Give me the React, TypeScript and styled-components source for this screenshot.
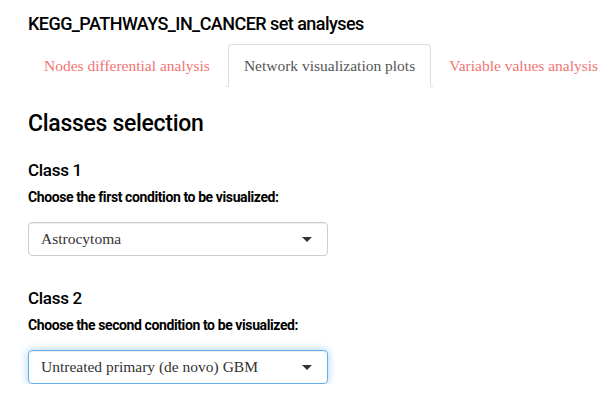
import React from "react";
import styled, { createGlobalStyle } from "styled-components";

const Global = createGlobalStyle`
  html, body { margin: 0; padding: 0; background: #ffffff; }
  body { font-family: "Liberation Serif", "Times New Roman", serif; color: #333; }
  * { box-sizing: border-box; }
`;

const heading = `Roboto, "Liberation Sans", sans-serif`;

const Page = styled.div`
  padding: 13px 0 0 28px;
  width: 614px;
`;

const Title = styled.h4`
  margin: 0;
  font-family: ${heading};
  font-size: 18px;
  line-height: 22px;
  font-weight: 500;
  letter-spacing: -0.55px;
  color: #000;
`;

const Tabs = styled.ul`
  display: flex;
  list-style: none;
  margin: 9px 0 0 0;
  padding: 0;
  border-bottom: 1px solid #dddddd;
`;

const Tab = styled.li<{ $active?: boolean }>`
  margin: 0 2px -1px 0;
  padding: 10px 15px;
  font-size: 15.5px;
  line-height: 21px;
  border: 1px solid ${(p) => (p.$active ? "#dddddd" : "transparent")};
  border-bottom-color: ${(p) => (p.$active ? "#ffffff" : "transparent")};
  border-radius: 4px 4px 0 0;
  background: #fff;
  color: ${(p) => (p.$active ? "#555555" : "#f27474")};
  white-space: nowrap;
`;

const SectionTitle = styled.h3`
  margin: 24px 0 0 0;
  font-family: ${heading};
  font-size: 23px;
  line-height: 25px;
  font-weight: 500;
  letter-spacing: -0.3px;
  color: #000;
`;

const Block = styled.div<{ $first?: boolean }>`
  display: flex;
  flex-direction: column;
  margin-top: ${(p) => (p.$first ? "25px" : "33px")};
`;

const ClassTitle = styled.h4`
  margin: 0;
  font-family: ${heading};
  font-size: 17px;
  line-height: 19px;
  font-weight: 500;
  letter-spacing: -0.3px;
  color: #000;
`;

const Label = styled.label`
  margin-top: 7px;
  font-family: ${heading};
  font-size: 14px;
  line-height: 20px;
  font-weight: 700;
  letter-spacing: -0.4px;
  color: #000;
`;

const Select = styled.div<{ $focused?: boolean }>`
  margin-top: 15px;
  width: 300px;
  height: 34px;
  display: flex;
  align-items: center;
  justify-content: space-between;
  padding: 0 15px 0 12px;
  border: 1px solid ${(p) => (p.$focused ? "#66afe9" : "#cccccc")};
  border-radius: 4px;
  background: #fff;
  box-shadow: ${(p) =>
    p.$focused
      ? "inset 0 1px 1px rgba(0,0,0,.075), 0 0 8px rgba(102,175,233,.6)"
      : "inset 0 1px 1px rgba(0,0,0,.075)"};
  font-size: 15.5px;
  color: #333;
`;

const Caret = styled.span`
  width: 0;
  height: 0;
  border-left: 5px solid transparent;
  border-right: 5px solid transparent;
  border-top: 5px solid #333;
  margin-top: 1px;
`;

export default function App() {
  return (
    <>
      <Global />
      <Page>
        <Title>KEGG_PATHWAYS_IN_CANCER set analyses</Title>
        <Tabs>
          <Tab>Nodes differential analysis</Tab>
          <Tab $active>Network visualization plots</Tab>
          <Tab>Variable values analysis</Tab>
        </Tabs>
        <SectionTitle>Classes selection</SectionTitle>
        <Block $first>
          <ClassTitle>Class 1</ClassTitle>
          <Label>Choose the first condition to be visualized:</Label>
          <Select>
            <span>Astrocytoma</span>
            <Caret />
          </Select>
        </Block>
        <Block>
          <ClassTitle>Class 2</ClassTitle>
          <Label>Choose the second condition to be visualized:</Label>
          <Select $focused>
            <span>Untreated primary (de novo) GBM</span>
            <Caret />
          </Select>
        </Block>
      </Page>
    </>
  );
}
